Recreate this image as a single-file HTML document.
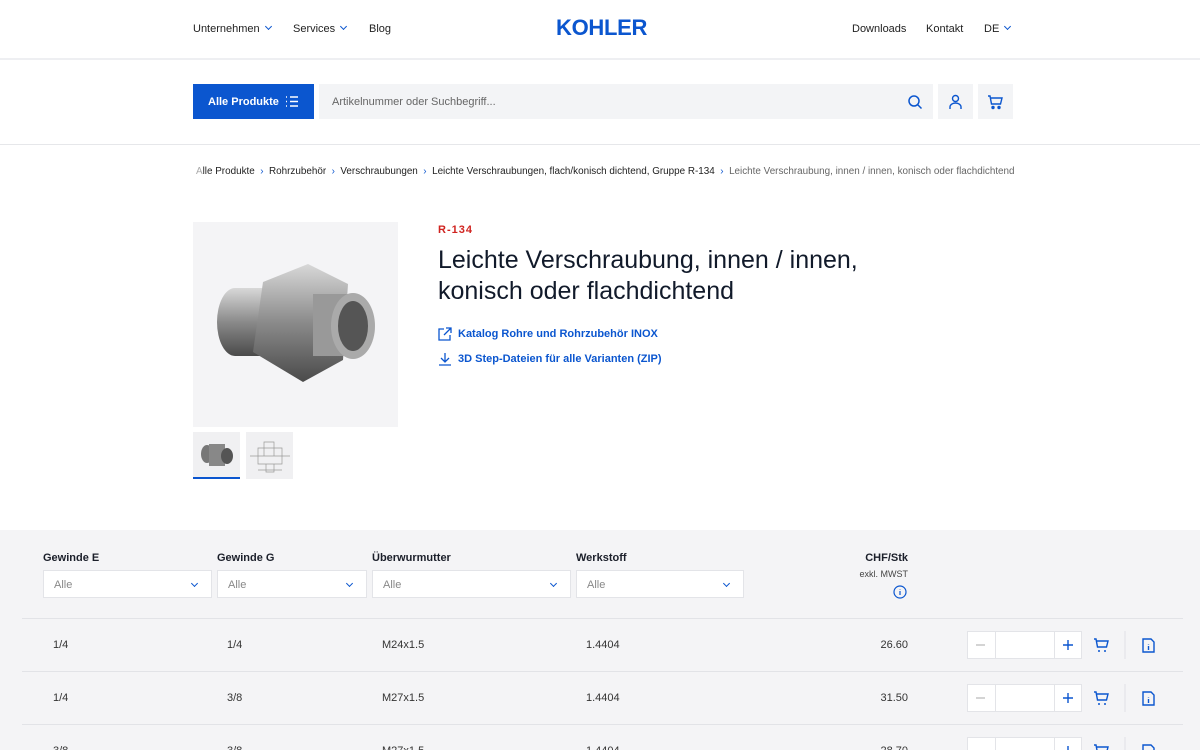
<!DOCTYPE html>
<html><head><meta charset="utf-8"><style>
*{box-sizing:border-box;margin:0;padding:0}
html,body{width:1200px;height:750px;overflow:hidden}
body{font-family:"Liberation Sans",sans-serif;color:#1b1f2a;background:#fff;position:relative}
.a{position:absolute}
.nav{font-size:11px;color:#222;top:23px}
.chev{display:inline-block;width:5px;height:5px;border-right:1.5px solid #0b56cf;border-bottom:1.5px solid #0b56cf;transform:rotate(45deg);margin-left:6px;position:relative;top:-3px}
.blue{color:#0b56cf}
.sel{background:#fff;border:1px solid #e3e4e8;height:28px;top:570px;font-size:11px;color:#888;padding:8px 10px}
.sel .chev{position:absolute;right:14px;top:10px;margin:0}
.hd{top:552px;font-size:11px;font-weight:bold}
.cell{font-size:11px;color:#333}
.hl{left:22px;width:1161px;height:1px;background:#e2e3e7}
.qty{left:967px;width:115px;height:28px;background:#fff;border:1px solid #e3e4e8}
.qty:before{content:"";position:absolute;left:27px;top:0;bottom:0;border-left:1px solid #e3e4e8}
.qty:after{content:"";position:absolute;left:86px;top:0;bottom:0;border-left:1px solid #e3e4e8}
</style></head><body>
<div class="a nav" style="left:193px">Unternehmen<span class="chev"></span></div>
<div class="a nav" style="left:293px">Services<span class="chev"></span></div>
<div class="a nav" style="left:369px">Blog</div>
<div class="a" style="left:556px;top:16px;font-size:22px;line-height:24px;font-weight:bold;color:#0b56cf;letter-spacing:-0.3px">KOHLER</div>
<div class="a nav" style="left:852px">Downloads</div>
<div class="a nav" style="left:926px">Kontakt</div>
<div class="a nav" style="left:984px">DE<span class="chev"></span></div>
<div class="a" style="left:0;top:58px;width:1200px;height:2px;background:#eeeff2"></div>

<div class="a" style="left:193px;top:84px;width:121px;height:35px;background:#0b56cf;color:#fff;font-size:11px;font-weight:bold;padding:12px 15px">Alle Produkte</div>
<svg class="a" style="left:285px;top:95px" width="14" height="13" viewBox="0 0 14 13" stroke="#fff" stroke-width="1.5"><path d="M1 2h1M5 2h8M1 6.5h1M5 6.5h8M1 11h1M5 11h8"/></svg>
<div class="a" style="left:319px;top:84px;width:614px;height:35px;background:#f3f4f6;font-size:11px;color:#666;padding:12px 13px">Artikelnummer oder Suchbegriff...</div>
<svg class="a" style="left:907px;top:94px" width="16" height="16" viewBox="0 0 16 16" fill="none" stroke="#0b56cf" stroke-width="1.5"><circle cx="7" cy="7" r="5"/><path d="M10.5 10.5l4 4"/></svg>
<div class="a" style="left:938px;top:84px;width:35px;height:35px;background:#f3f4f6"></div>
<svg class="a" style="left:948px;top:94px" width="15" height="16" viewBox="0 0 15 16" fill="none" stroke="#0b56cf" stroke-width="1.4"><circle cx="7.5" cy="4.5" r="3"/><path d="M2 15v-2a5.5 4 0 0 1 11 0v2"/></svg>
<div class="a" style="left:978px;top:84px;width:35px;height:35px;background:#f3f4f6"></div>
<svg class="a" style="left:987px;top:94px" width="16" height="16" viewBox="0 0 16 16" fill="none" stroke="#0b56cf" stroke-width="1.4"><path d="M1 2h2l1.5 8h9l1.5-6H4"/><circle cx="6" cy="13.5" r="1" fill="#0b56cf"/><circle cx="12" cy="13.5" r="1" fill="#0b56cf"/></svg>
<div class="a" style="left:0;top:144px;width:1200px;height:1px;background:#e6e7ea"></div>

<div class="a" style="left:196px;top:166px;font-size:9.9px;color:#222;white-space:nowrap"><span style="color:#aaa">A</span>lle Produkte <span class="blue">&nbsp;›&nbsp;</span> Rohrzubehör <span class="blue">&nbsp;›&nbsp;</span> Verschraubungen <span class="blue">&nbsp;›&nbsp;</span> Leichte Verschraubungen, flach/konisch dichtend, Gruppe R-134 <span class="blue">&nbsp;›&nbsp;</span> <span style="color:#666">Leichte Verschraubung, innen / innen, konisch oder flachdichtend</span></div>

<div class="a" style="left:193px;top:222px;width:205px;height:205px;background:#f4f4f6"></div>
<svg class="a" style="left:193px;top:222px" width="205" height="205" viewBox="0 0 205 205">
<defs><linearGradient id="g" x1="0" y1="0" x2="0" y2="1"><stop offset="0" stop-color="#d8d8d8"/><stop offset=".5" stop-color="#8a8a8a"/><stop offset="1" stop-color="#4a4a4a"/></linearGradient></defs>
<ellipse cx="42" cy="100" rx="18" ry="34" fill="url(#g)"/>
<rect x="42" y="66" width="30" height="68" fill="url(#g)"/>
<polygon points="70,60 115,42 155,62 150,138 110,160 60,130" fill="url(#g)"/>
<rect x="120" y="72" width="45" height="62" fill="#999"/>
<ellipse cx="160" cy="104" rx="22" ry="33" fill="#aaa"/>
<ellipse cx="160" cy="104" rx="15" ry="25" fill="#555"/>
</svg>
<div class="a" style="left:193px;top:432px;width:47px;height:47px;background:#f0f0f2"></div>
<svg class="a" style="left:197px;top:438px" width="40" height="34" viewBox="0 0 40 34"><ellipse cx="10" cy="16" rx="6" ry="9" fill="#777"/><rect x="12" y="6" width="16" height="22" fill="#888"/><ellipse cx="30" cy="18" rx="6" ry="8" fill="#555"/></svg>
<div class="a" style="left:193px;top:477px;width:47px;height:2px;background:#0b56cf"></div>
<div class="a" style="left:246px;top:432px;width:47px;height:47px;background:#f0f0f2"></div>
<svg class="a" style="left:246px;top:432px" width="47" height="47" viewBox="0 0 47 47" fill="none" stroke="#999" stroke-width=".7"><path d="M12 16h24v16H12zM18 10h10v14H18zM4 24h40M12 38h24M20 32v8h8v-8"/></svg>

<div class="a" style="left:438px;top:224px;font-size:11px;font-weight:bold;color:#d0231f;letter-spacing:1px">R-134</div>
<div class="a" style="left:438px;top:245px;font-size:25px;line-height:31px;color:#111a2a">Leichte Verschraubung, innen / innen,<br>konisch oder flachdichtend</div>
<svg class="a" style="left:438px;top:327px" width="14" height="14" viewBox="0 0 14 14" fill="none" stroke="#0b56cf" stroke-width="1.3"><path d="M6 2H1v11h11V8M8 1h5v5M13 1L6 8"/></svg>
<div class="a blue" style="left:458px;top:328px;font-size:11px;font-weight:bold">Katalog Rohre und Rohrzubehör INOX</div>
<svg class="a" style="left:438px;top:352px" width="14" height="14" viewBox="0 0 14 14" fill="none" stroke="#0b56cf" stroke-width="1.3"><path d="M7 1v9M3 6l4 4 4-4M1 13h12"/></svg>
<div class="a blue" style="left:458px;top:353px;font-size:11px;font-weight:bold">3D Step-Dateien für alle Varianten (ZIP)</div>

<div class="a" style="left:0;top:530px;width:1200px;height:220px;background:#f4f4f6;overflow:hidden">
<div class="a hd" style="left:43px;top:22px">Gewinde E</div>
<div class="a hd" style="left:217px;top:22px">Gewinde G</div>
<div class="a hd" style="left:372px;top:22px">Überwurmutter</div>
<div class="a hd" style="left:576px;top:22px">Werkstoff</div>
<div class="a hd" style="left:808px;width:100px;text-align:right;top:22px">CHF/Stk</div>
<div class="a" style="left:808px;width:100px;text-align:right;top:39px;font-size:9px;color:#444">exkl. MWST</div>
<svg class="a" style="left:893px;top:55px" width="14" height="14" viewBox="0 0 14 14" fill="none" stroke="#0b56cf" stroke-width="1.2"><circle cx="7" cy="7" r="6"/><path d="M7 6v4M7 4v.5"/></svg>
<div class="a sel" style="left:43px;width:169px;top:40px">Alle<span class="chev"></span></div>
<div class="a sel" style="left:217px;width:150px;top:40px">Alle<span class="chev"></span></div>
<div class="a sel" style="left:372px;width:199px;top:40px">Alle<span class="chev"></span></div>
<div class="a sel" style="left:576px;width:168px;top:40px">Alle<span class="chev"></span></div>

<div class="a hl" style="top:88px"></div>
<div class="a hl" style="top:141px"></div>
<div class="a hl" style="top:194px"></div>

<div class="a cell" style="left:53px;top:109px">1/4</div>
<div class="a cell" style="left:227px;top:109px">1/4</div>
<div class="a cell" style="left:382px;top:109px">M24x1.5</div>
<div class="a cell" style="left:586px;top:109px">1.4404</div>
<div class="a cell" style="left:808px;width:100px;text-align:right;top:109px">26.60</div>

<div class="a cell" style="left:53px;top:162px">1/4</div>
<div class="a cell" style="left:227px;top:162px">3/8</div>
<div class="a cell" style="left:382px;top:162px">M27x1.5</div>
<div class="a cell" style="left:586px;top:162px">1.4404</div>
<div class="a cell" style="left:808px;width:100px;text-align:right;top:162px">31.50</div>

<div class="a cell" style="left:53px;top:215px">3/8</div>
<div class="a cell" style="left:227px;top:215px">3/8</div>
<div class="a cell" style="left:382px;top:215px">M27x1.5</div>
<div class="a cell" style="left:586px;top:215px">1.4404</div>
<div class="a cell" style="left:808px;width:100px;text-align:right;top:215px">28.70</div>

<div class="a qty" style="top:101px"></div>
<div class="a qty" style="top:154px"></div>
<div class="a qty" style="top:207px"></div>

<svg class="a" style="left:960px;top:90px" width="240" height="130" viewBox="0 0 240 130">
<g stroke="#bbb" stroke-width="1.2"><path d="M16 25h9M16 78h9M16 131h9"/></g>
<g stroke="#0b56cf" stroke-width="1.4" fill="none"><path d="M103 25h10M108 20v10M103 78h10M108 73v10M103 131h10M108 126v10"/>
<path d="M134 19h2l1.5 8h9l1.5-6H137"/><path d="M134 72h2l1.5 8h9l1.5-6H137"/><path d="M134 125h2l1.5 8h9l1.5-6H137"/>
<path d="M183 19h8l3 3v10h-11zM188.5 24v.5M188.5 26v4"/><path d="M183 72h8l3 3v10h-11zM188.5 77v.5M188.5 79v4"/><path d="M183 125h8l3 3v10h-11z"/></g>
<g fill="#0b56cf"><circle cx="139" cy="31" r="1"/><circle cx="145" cy="31" r="1"/><circle cx="139" cy="84" r="1"/><circle cx="145" cy="84" r="1"/></g>
<g stroke="#e0e1e5"><path d="M165 11v28M165 64v28M165 117v28"/></g>
</svg>
</div>
</body></html>
